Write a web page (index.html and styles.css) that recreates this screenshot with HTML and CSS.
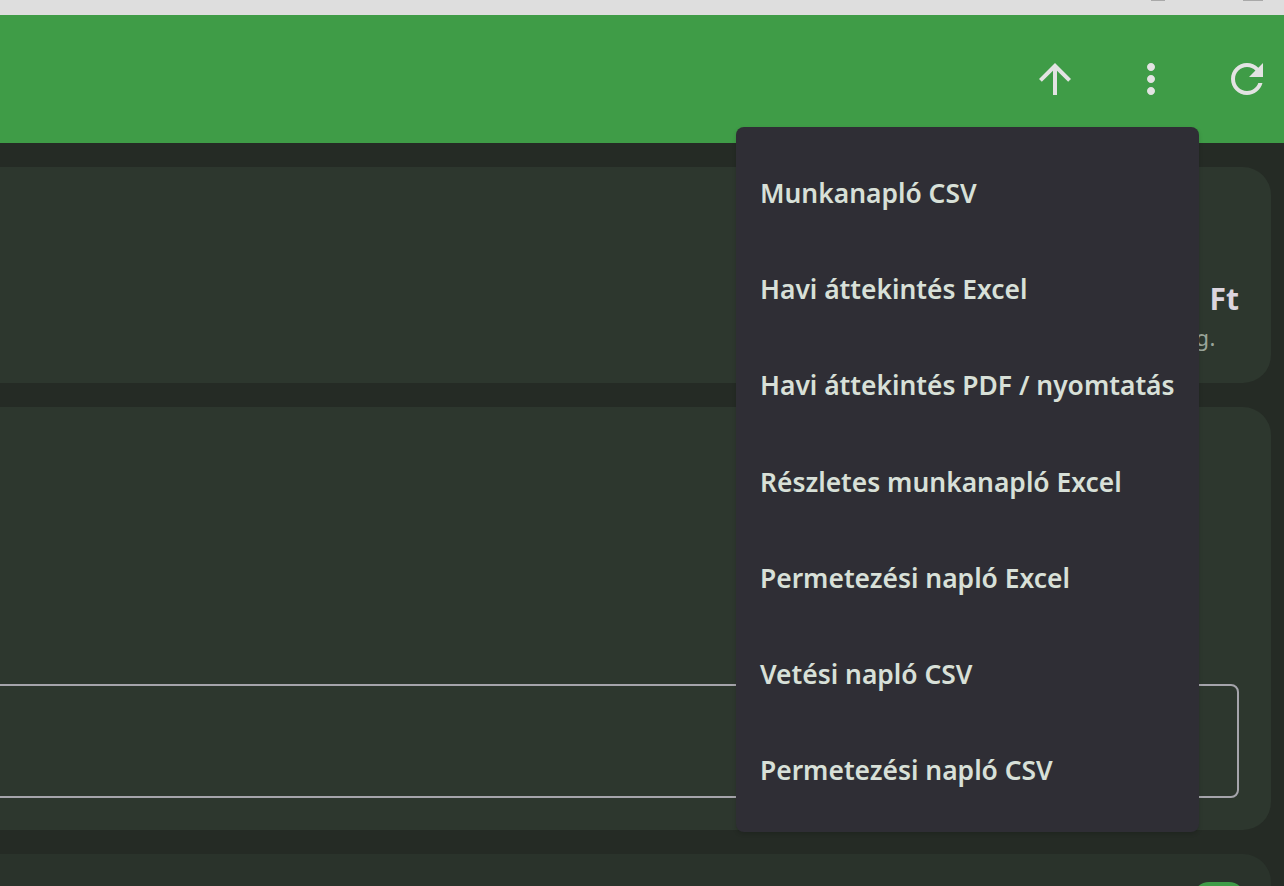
FILE: index.html
```html
<!DOCTYPE html>
<html lang="hu">
<head>
<meta charset="utf-8">
<title>Munkanapló</title>
<link rel="stylesheet" href="styles.css">
</head>
<body>
<div class="page">
  <div class="browser-strip">
    <span class="strip-mark strip-mark-a"></span>
    <span class="strip-mark strip-mark-b"></span>
  </div>
  <header class="app-bar">
    <button class="icon-btn" aria-label="Feltöltés">
      <svg viewBox="0 0 24 24"><path d="M4 12l1.41 1.41L11 7.83V20h2V7.83l5.58 5.59L20 12l-8-8-8 8z"/></svg>
    </button>
    <button class="icon-btn" aria-label="Export">
      <svg viewBox="0 0 24 24"><path d="M12 8c1.1 0 2-.9 2-2s-.9-2-2-2-2 .9-2 2 .9 2 2 2zm0 2c-1.1 0-2 .9-2 2s.9 2 2 2 2-.9 2-2-.9-2-2-2zm0 6c-1.1 0-2 .9-2 2s.9 2 2 2 2-.9 2-2-.9-2-2-2z"/></svg>
    </button>
    <button class="icon-btn" aria-label="Frissítés">
      <svg viewBox="0 0 24 24"><path d="M17.65 6.35C16.2 4.9 14.21 4 12 4c-4.42 0-7.99 3.58-7.99 8s3.57 8 7.99 8c3.73 0 6.84-2.55 7.73-6h-2.08c-.82 2.33-3.04 4-5.65 4-3.31 0-6-2.69-6-6s2.69-6 6-6c1.66 0 3.14.69 4.22 1.78L13 11h7V4l-2.35 2.35z"/></svg>
    </button>
  </header>
  <main class="content">
    <section class="card card-summary">
      <div class="amount">Ft</div>
      <div class="amount-note">g.</div>
    </section>
    <section class="card card-form">
      <div class="outlined-box"></div>
    </section>
    <section class="card card-list">
      <span class="switch"></span>
    </section>
  </main>
  <ul class="menu">
    <li class="menu-item">Munkanapló CSV</li>
    <li class="menu-item">Havi áttekintés Excel</li>
    <li class="menu-item">Havi áttekintés PDF / nyomtatás</li>
    <li class="menu-item">Részletes munkanapló Excel</li>
    <li class="menu-item">Permetezési napló Excel</li>
    <li class="menu-item">Vetési napló CSV</li>
    <li class="menu-item">Permetezési napló CSV</li>
  </ul>
</div>
</body>
</html>
```
FILE: styles.css
```css
* { box-sizing: border-box; }
html, body { margin: 0; padding: 0; height: 100%; overflow: hidden; }
body { background: #252b25; font-family: "Noto Sans", "Open Sans", sans-serif; }
.page { position: relative; width: 1284px; height: 886px; overflow: hidden; }
.browser-strip { position: relative; height: 15px; background: #dedede; }
.strip-mark { position: absolute; top: 0; height: 1px; background: #a9a9a9; }
.strip-mark-a { left: 1151px; width: 14px; }
.strip-mark-b { left: 1243px; width: 20px; }
.app-bar {
  display: flex; justify-content: flex-end; align-items: center; gap: 48px;
  height: 128px; margin-right: -11px;
  background: #3f9c47;
  padding-right: 24px;
}
.icon-btn { width: 48px; height: 48px; padding: 0; border: 0; background: none; display: block; }
.icon-btn svg { display: block; width: 48px; height: 48px; fill: #e3e3e3; }
.content { display: flex; flex-direction: column; gap: 24px; padding: 24px 13px 0 0; margin-left: -40px; }
.card { border-radius: 28px; background: #2d372e; padding: 32px; }
.card-summary { height: 216px; display: flex; flex-direction: column; align-items: flex-end; padding-top: 112px; }
.amount { font-size: 30px; font-weight: 700; line-height: 40px; color: #dcd5de; }
.amount-note { font-size: 22px; line-height: 28px; color: #9aa59b; margin-top: 4px; margin-right: 23px; letter-spacing: 0.5px; }
.card-form { height: 423px; display: flex; flex-direction: column; justify-content: flex-end; }
.outlined-box { height: 114px; margin-left: -40px; border: 2px solid #a5a4ab; border-radius: 8px; }
.card-list { height: 120px; background: #2a332b; position: relative; padding-top: 28px; display: flex; justify-content: flex-end; }
.switch { display: block; width: 52px; height: 32px; margin-right: -6px; border-radius: 16px; background: #3f9c47; }
.menu {
  position: absolute; left: 736px; top: 127px; width: 463px; height: 705px;
  margin: 0; padding: 18px 0; list-style: none;
  background: #2f2e35; border-radius: 8px;
  box-shadow: 0 2px 4px rgba(0,0,0,0.15);
}
.menu-item {
  height: 96.3px; padding: 0 24px 1px; display: flex; align-items: center;
  font-size: 26.4px; font-weight: 600; color: #d8e0d8; white-space: nowrap;
}
```
